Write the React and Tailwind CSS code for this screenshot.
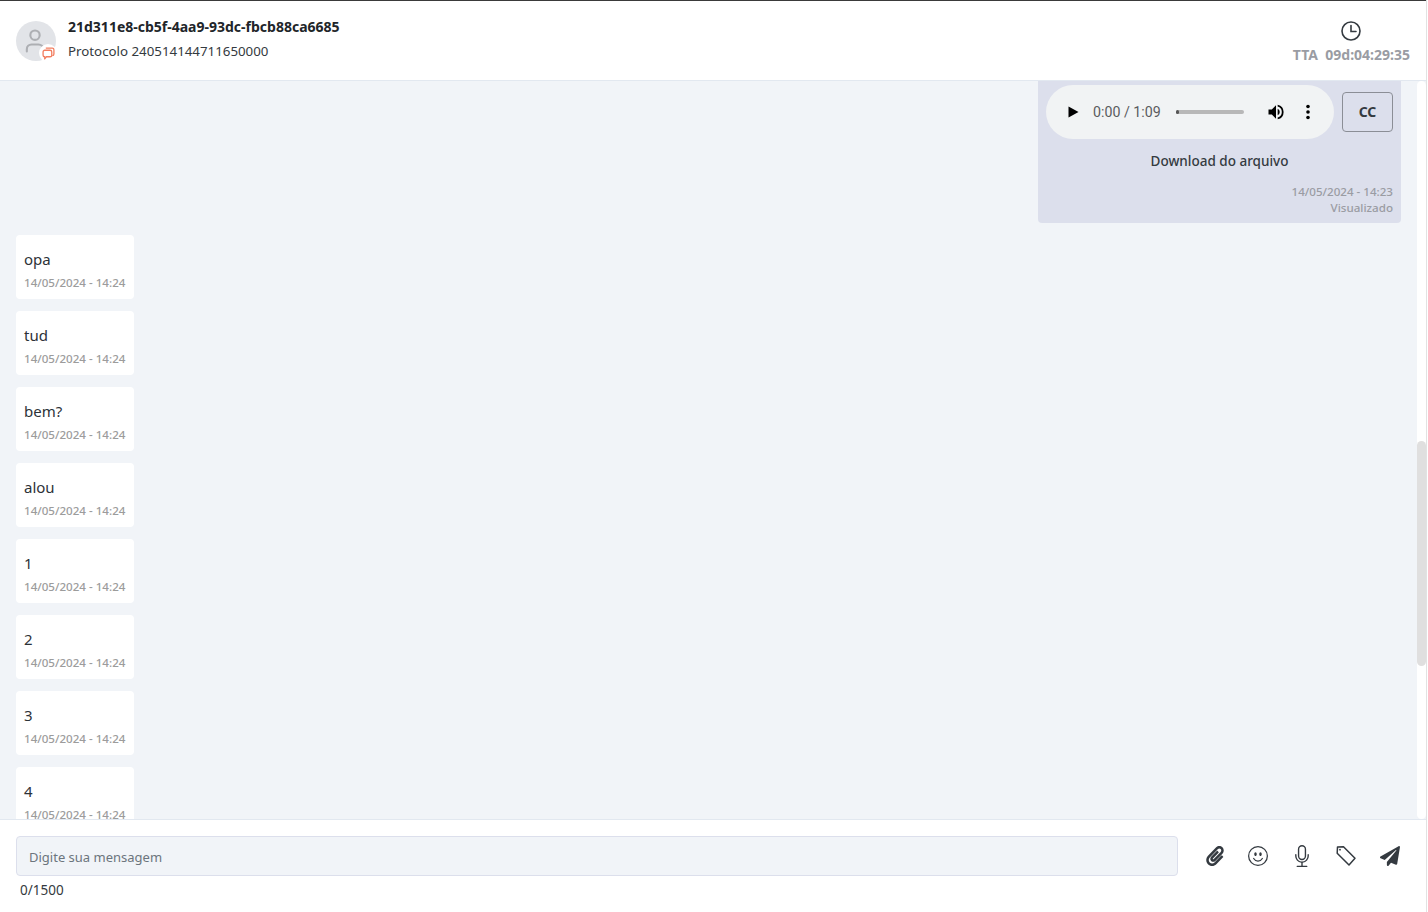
import { User } from 'lucide-react';
import { BsEmojiSmile, BsMic } from 'react-icons/bs';
import { FaPaperPlane, FaPaperclip } from 'react-icons/fa';

const messages = ['opa', 'tud', 'bem?', 'alou', '1', '2', '3', '4'];

function Header() {
  return (
    <header className="h-[81px] shrink-0 flex items-start justify-between bg-white border-t border-t-[#3a3a3a] border-b border-b-[#e2e8f0]">
      <div className="flex pl-4 pt-5">
        <div className="relative w-10 h-10 rounded-full bg-[#e2e4e8] flex items-center justify-center">
          <User className="w-7 h-7 text-[#adafb3] -translate-x-px" strokeWidth={1.8} />
          <span className="absolute right-[-1px] bottom-[-1px] w-[18px] h-[18px] rounded-full bg-white flex items-center justify-center">
            <svg className="w-[13px] h-[13px] text-[#f27d5f]" viewBox="0 0 12 12" fill="none" stroke="currentColor" strokeWidth="1.2" strokeLinejoin="round">
              <path d="M3.5 1H9.5A1.5 1.5 0 0 1 11 2.5V6.5A1.5 1.5 0 0 1 9.5 8" />
              <path d="M2.5 3H7.5A1.5 1.5 0 0 1 9 4.5V7.5A1.5 1.5 0 0 1 7.5 9H4L2.5 11V9A1.5 1.5 0 0 1 1 7.5V4.5A1.5 1.5 0 0 1 2.5 3Z" />
            </svg>
          </span>
        </div>
        <div className="ml-3 -mt-1">
          <p className="text-sm leading-5 font-bold text-[#212529]">21d311e8-cb5f-4aa9-93dc-fbcb88ca6685</p>
          <p className="mt-1 text-[13.3px] leading-5 text-[#343a40]">Protocolo 240514144711650000</p>
        </div>
      </div>
      <div className="flex flex-col items-center pr-4 pt-5">
        <svg className="w-5 h-5 text-[#343a40]" viewBox="0 0 20 20" fill="none" stroke="currentColor" strokeWidth="1.6" strokeLinecap="round">
          <circle cx="10" cy="10" r="9" />
          <path d="M10 4.5V10.5H15" />
        </svg>
        <p className="mt-1 text-sm leading-5 font-bold text-[#9a9ca3] whitespace-pre">TTA  09d:04:29:35</p>
      </div>
    </header>
  );
}

function AudioBubble() {
  return (
    <div className="shrink-0 ml-auto mr-4 w-[363px] h-[142px] bg-[#dcdfec] rounded-b px-2 pt-1">
      <div className="flex items-start gap-2">
        <div className="w-[288px] h-[54px] rounded-full bg-[#f1f3f4] flex items-center">
          <svg className="ml-[21px] w-3 h-3" viewBox="0 0 12 12" fill="black">
            <path d="M1.5 .5L11.5 6L1.5 11.5Z" />
          </svg>
          <span className="ml-[14px] pt-px text-[14.2px] text-[#5a5b5e] font-['Roboto',sans-serif]">0:00 / 1:09</span>
          <div className="ml-[15px] w-[68px] h-1 rounded-full bg-[#b8b8b8]">
            <div className="w-[3px] h-1 rounded-full bg-[#555]" />
          </div>
          <svg className="ml-[22px] w-5 h-5" viewBox="0 0 24 24" fill="black">
            <path d="M3 9v6h4l5 5V4L7 9H3zm13.5 3A4.5 4.5 0 0 0 14 8v8a4.5 4.5 0 0 0 2.5-4zM14 3.2v2.1a7 7 0 0 1 0 13.4v2.1a9 9 0 0 0 0-17.6z" />
          </svg>
          <svg className="ml-[20px] w-1 h-4" viewBox="0 0 4 16" fill="black">
            <circle cx="2" cy="2.5" r="1.8" />
            <circle cx="2" cy="8" r="1.8" />
            <circle cx="2" cy="13.5" r="1.8" />
          </svg>
        </div>
        <button type="button" className="mt-[7px] w-[51px] h-10 border border-[#8b8e96] rounded text-sm font-bold text-[#343a40]">CC</button>
      </div>
      <p className="mt-3 text-center text-[13.5px] leading-5 font-medium text-[#343a40]">Download do arquivo</p>
      <div className="mt-[13px] text-right text-[11.6px] leading-4 font-medium text-[#9a9ca3]">
        <p>14/05/2024 - 14:23</p>
        <p>Visualizado</p>
      </div>
    </div>
  );
}

function Message({ text }) {
  return (
    <div className="w-[118px] h-16 shrink-0 bg-white rounded p-2">
      <p className="mt-[6px] text-[15px] leading-5 text-[#2d3238]">{text}</p>
      <p className="mt-[6px] text-[11.6px] leading-4 font-medium text-[#9c9c9c] whitespace-nowrap">14/05/2024 - 14:24</p>
    </div>
  );
}

function Footer() {
  return (
    <footer className="h-[93px] shrink-0 bg-white border-t border-[#e2e8f0] pl-4 pr-[14px] pt-4">
      <div className="flex items-center">
        <input
          readOnly
          placeholder="Digite sua mensagem"
          className="flex-1 min-w-0 h-10 px-3 pt-px bg-[#f1f4f8] border border-[#dcdfec] rounded text-[13px] text-[#6c757d] placeholder:text-[#6c757d] outline-none"
        />
        <div className="ml-[15px] flex items-center text-[#343a40]">
          <span className="w-[43px] flex justify-center"><FaPaperclip className="w-5 h-5" /></span>
          <span className="w-11 flex justify-center"><BsEmojiSmile className="w-5 h-5" /></span>
          <span className="w-11 flex justify-center"><BsMic className="w-[22px] h-[22px]" /></span>
          <span className="w-11 flex justify-center">
            <svg className="w-6 h-6" viewBox="0 0 24 24" fill="none" stroke="currentColor" strokeWidth="1.5" strokeLinejoin="round">
              <path d="M3.5 3L9.5 2.8L21 14.3L15 21L3.2 9.2Z" />
              <circle cx="6" cy="5.7" r="0.9" fill="currentColor" stroke="none" />
            </svg>
          </span>
          <span className="w-11 flex justify-center"><FaPaperPlane className="w-5 h-5" /></span>
        </div>
      </div>
      <p className="mt-1 ml-1 text-[13.5px] leading-5 text-[#343a40]">0/1500</p>
    </footer>
  );
}

export default function App() {
  return (
    <div className="w-[1427px] h-screen flex flex-col overflow-hidden bg-white border-r border-[#e2e2e2] font-['Noto_Sans',sans-serif]">
      <Header />
      <div className="flex-1 min-h-0 flex bg-[#f1f4f8]">
        <main className="flex-1 min-w-0 overflow-hidden flex flex-col">
          <AudioBubble />
          <div className="pl-4 pt-3 flex flex-col gap-3">
            {messages.map((m) => (
              <Message key={m} text={m} />
            ))}
          </div>
        </main>
        <div className="w-[9px] shrink-0 bg-white rounded-md">
          <div className="mt-[360px] h-[225px] rounded-full bg-[#e0dfdf]" />
        </div>
      </div>
      <Footer />
    </div>
  );
}
